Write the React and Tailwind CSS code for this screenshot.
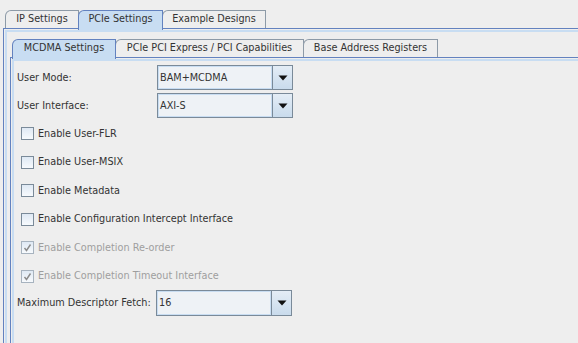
import { useState } from "react";

const OUTER_TABS = [
  { label: "IP Settings", width: "w-[74px]" },
  { label: "PCIe Settings", width: "w-[85px]", selected: true },
  { label: "Example Designs", width: "w-[104px]" },
];

const INNER_TABS = [
  { label: "MCDMA Settings", width: "w-[104px]", selected: true },
  { label: "PCIe PCI Express / PCI Capabilities", width: "w-[189px]" },
  { label: "Base Address Registers", width: "w-[135px]" },
];

const CHECKS = [
  { label: "Enable User-FLR", height: "h-[29px]" },
  { label: "Enable User-MSIX", height: "h-[28px]" },
  { label: "Enable Metadata", height: "h-[29px]" },
  { label: "Enable Configuration Intercept Interface", height: "h-[28px]" },
  { label: "Enable Completion Re-order", height: "h-[29px]", checked: true, disabled: true },
  { label: "Enable Completion Timeout Interface", height: "h-[28px]", checked: true, disabled: true },
];

function Tab({ label, width, selected, first }) {
  return (
    <div
      className={`${width} ${first ? "" : "-ml-px"} ${
        selected
          ? "relative z-10 h-[20px] -mb-[2px] bg-[#c8ddf2] border-[#6382bf]"
          : "h-[18px] bg-[#eeeeee] border-[#8d9aa7]"
      } flex items-start justify-center pt-[3px] border-l border-t border-r rounded-tl-[6px] whitespace-nowrap`}
    >
      {label}
    </div>
  );
}

function Combo({ value, height = "h-[25px]" }) {
  return (
    <div className={`flex ${height} w-[136px] border border-[#7a8a99]`}>
      <div className="flex-1 flex items-center pl-[1px] border border-[#c8ddf2] bg-[#eef2f6]">
        {value}
      </div>
      <div className="w-[20px] flex items-center justify-center border-l border-[#7a8a99] bg-linear-to-b from-[#e4edf6] to-[#c9dbec]">
        <svg width="10" height="6" viewBox="0 0 10 6">
          <path d="M0.5 0.5 H9.5 L5 5.5 Z" fill="#111111" />
        </svg>
      </div>
    </div>
  );
}

function Check({ label, height, checked, disabled }) {
  const [on, setOn] = useState(!!checked);
  return (
    <div className={`${height} flex items-center pl-[4px] gap-[4px]`}>
      <button
        type="button"
        disabled={disabled}
        onClick={() => setOn(!on)}
        className={`w-[13px] h-[13px] flex items-center justify-center border ${
          disabled ? "border-[#a7b3bf]" : "border-[#7a8a99]"
        } bg-linear-to-b from-[#dfe9f4] to-[#f7fafd]`}
      >
        {on && (
          <svg width="9" height="9" viewBox="0 0 9 9">
            <path
              d="M1.5 5 L3.5 7.5 L7.5 1.5"
              fill="none"
              stroke={disabled ? "#8a8a8a" : "#333333"}
              strokeWidth="1.4"
            />
          </svg>
        )}
      </button>
      <span className={disabled ? "text-[#9e9e9e]" : ""}>{label}</span>
    </div>
  );
}

export default function App() {
  return (
    <div className="w-[578px] h-[343px] overflow-hidden bg-[#eeeeee] text-[#333333] text-[9.7px] leading-none font-['DejaVu_Sans',sans-serif]">
      <div className="flex items-end pt-[10px] pl-[5px] h-[28px]">
        {OUTER_TABS.map((tab, i) => (
          <Tab key={tab.label} {...tab} first={i === 0} />
        ))}
      </div>

      <div className="ml-[3px] w-[620px] h-[330px] border-l border-t border-[#6382bf]">
        <div className="mt-px ml-px h-full border-l-2 border-t-2 border-[#c8ddf2] pt-[7px] pl-[3px]">
          <div className="flex items-end pl-[2px] h-[18px]">
            {INNER_TABS.map((tab, i) => (
              <Tab key={tab.label} {...tab} first={i === 0} />
            ))}
          </div>

          <div className="w-[600px] h-[300px] border-l border-t border-[#6382bf]">
            <div className="mt-px ml-px h-full border-l-2 border-t-2 border-[#c8ddf2] pt-[4px] pl-[3px]">
              <div className="flex items-center">
                <span className="w-[140px]">User Mode:</span>
                <Combo value="BAM+MCDMA" />
              </div>
              <div className="flex items-center mt-[3px]">
                <span className="w-[140px]">User Interface:</span>
                <Combo value="AXI-S" />
              </div>
              <div className="mt-px">
                {CHECKS.map((c) => (
                  <Check key={c.label} {...c} />
                ))}
              </div>
              <div className="flex items-center">
                <span className="w-[139px]">Maximum Descriptor Fetch:</span>
                <Combo value="16" height="h-[26px]" />
              </div>
            </div>
          </div>
        </div>
      </div>
    </div>
  );
}
